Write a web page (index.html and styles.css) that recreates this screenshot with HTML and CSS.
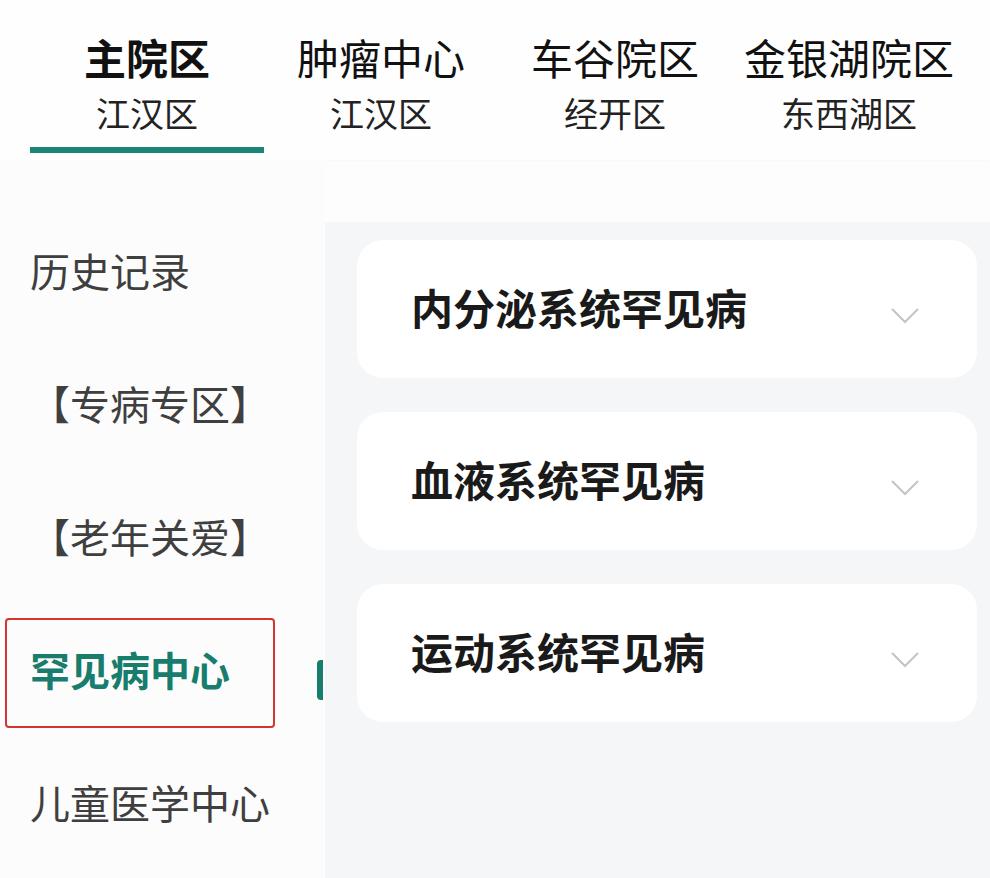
FILE: index.html
```html
<!DOCTYPE html>
<html lang="zh-CN">
<head>
<meta charset="utf-8">
<title>院区</title>
<link rel="stylesheet" href="styles.css">
</head>
<body>
<div class="page">
  <header class="tabs">
    <div class="tab active">
      <div class="tab-title">主院区</div>
      <div class="tab-sub">江汉区</div>
      <div class="tab-line"></div>
    </div>
    <div class="tab">
      <div class="tab-title">肿瘤中心</div>
      <div class="tab-sub">江汉区</div>
    </div>
    <div class="tab">
      <div class="tab-title">车谷院区</div>
      <div class="tab-sub">经开区</div>
    </div>
    <div class="tab">
      <div class="tab-title">金银湖院区</div>
      <div class="tab-sub">东西湖区</div>
    </div>
  </header>
  <div class="body">
    <nav class="side">
      <div class="side-item">历史记录</div>
      <div class="side-item bracket">【专病专区】</div>
      <div class="side-item bracket">【老年关爱】</div>
      <div class="side-item active">罕见病中心<span class="mark"></span><span class="annot"></span></div>
      <div class="side-item">儿童医学中心</div>
    </nav>
    <main class="content">
      <div class="card">
        <span class="card-title">内分泌系统罕见病</span>
        <svg class="chev" width="30" height="18" viewBox="0 0 30 18"><path d="M2 2 L15 15 L28 2" fill="none" stroke="#c4c4c4" stroke-width="2"/></svg>
      </div>
      <div class="card">
        <span class="card-title">血液系统罕见病</span>
        <svg class="chev" width="30" height="18" viewBox="0 0 30 18"><path d="M2 2 L15 15 L28 2" fill="none" stroke="#c4c4c4" stroke-width="2"/></svg>
      </div>
      <div class="card">
        <span class="card-title">运动系统罕见病</span>
        <svg class="chev" width="30" height="18" viewBox="0 0 30 18"><path d="M2 2 L15 15 L28 2" fill="none" stroke="#c4c4c4" stroke-width="2"/></svg>
      </div>
    </main>
  </div>
</div>
</body>
</html>
```
FILE: styles.css
```css
* { box-sizing: border-box; }
html, body { margin: 0; padding: 0; }
body {
  font-family: "Noto Sans CJK SC", "Noto Sans", sans-serif;
  background: #fdfdfd;
  width: 990px;
  height: 878px;
  overflow: hidden;
}
.page { display: flex; flex-direction: column; height: 878px; }
.tabs {
  display: flex;
  padding: 32px 0 0 30px;
  height: 160px;
  background: #fefefe;
  box-shadow: 0 1px 2px rgba(0,0,0,0.025);
}
.tab {
  width: 234px;
  display: flex;
  flex-direction: column;
  align-items: center;
}
.tab-title {
  font-size: 42px;
  line-height: 50px;
  color: #111;
}
.tab.active .tab-title { font-weight: 700; }
.tab-sub {
  margin-top: 11px;
  font-size: 34px;
  line-height: 40px;
  color: #222;
}
.tab-line {
  margin-top: 14px;
  width: 100%;
  height: 6px;
  background: #1b8676;
}
.body { flex: 1; display: flex; }
.side {
  width: 325px;
  padding-top: 43px;
  background: #fcfcfc;
}
.side-item {
  position: relative;
  height: 133px;
  display: flex;
  align-items: center;
  padding-left: 30px;
  font-size: 40px;
  color: #3f3f3f;
}
.side-item.bracket { padding-left: 30px; }
.side-item.active {
  color: #187d6d;
  font-weight: 700;
}
.mark {
  position: absolute;
  right: 2px;
  top: 58px;
  width: 6px;
  height: 40px;
  border-radius: 4px 0 0 4px;
  background: #187d6d;
}
.annot {
  position: absolute;
  left: 5px;
  top: 16px;
  width: 270px;
  height: 110px;
  border: 2px solid #d2362e;
  border-radius: 4px;
}
.content {
  flex: 1;
  margin-top: 62px;
  padding: 18px 13px 0 32px;
  background: #f5f6f8;
  display: flex;
  flex-direction: column;
  gap: 34px;
}
.card {
  height: 138px;
  background: #fff;
  border-radius: 26px;
  display: flex;
  align-items: center;
  justify-content: space-between;
  padding: 0 57px 0 54px;
}
.card-title {
  font-size: 42px;
  font-weight: 700;
  color: #1a1a1a;
  margin-top: -6px;
}
.chev { display: block; margin-top: 14px; }
```
